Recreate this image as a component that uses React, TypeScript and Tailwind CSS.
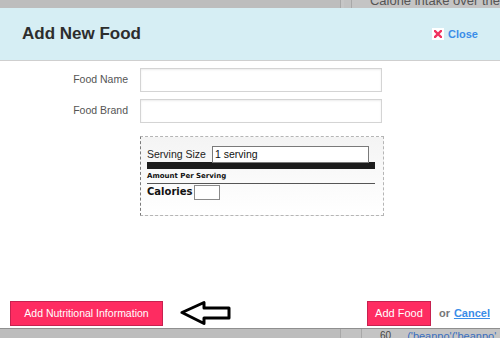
import React from 'react'

// ── Small pieces ──────────────────────────────────────────────────────────────

const CloseIcon: React.FC = () => (
  <span className="flex h-[12px] w-[12px] items-center justify-center bg-white">
    <svg width="8" height="8" viewBox="0 0 8 8" aria-hidden="true">
      <path d="M1 1L7 7M7 1L1 7" stroke="#f0325f" strokeWidth="2.4" strokeLinecap="square" />
    </svg>
  </span>
)

const ArrowLeft: React.FC = () => (
  <svg width="52" height="26" viewBox="0 0 52 26" aria-hidden="true">
    <path
      d="M2 12.5L24 2.5V8H49V18H24V23.5Z"
      fill="none"
      stroke="#000"
      strokeWidth="3"
      strokeLinejoin="round"
    />
  </svg>
)

const Field: React.FC<{ label: string }> = ({ label }) => (
  <div className="flex items-center">
    <label className="w-[129px] pr-[1px] text-right text-[10.5px] text-[#555]">{label}</label>
    <input
      className="ml-[11px] h-[24px] w-[242px] border border-[#d4d4d4] bg-white shadow-[inset_0_1px_2px_rgba(0,0,0,0.08)] outline-none"
      readOnly
    />
  </div>
)

// ── App ───────────────────────────────────────────────────────────────────────

export default function App() {
  return (
    <div
      className="flex h-[338px] w-[500px] flex-col overflow-hidden bg-[#bdbdbd]"
      style={{ fontFamily: '"Liberation Sans", Arial, sans-serif' }}
    >
      {/* page behind, top edge */}
      <div className="flex h-[8px] shrink-0 items-end overflow-hidden">
        <div className="w-[340px] shrink-0" />
        <div className="h-full w-[1px] bg-[#a8a8a8]" />
        <div className="h-full w-[6px] bg-[#c6c6c6]" />
        <div className="h-full w-[13px] bg-[#c2c2c2]" />
        <div className="h-full w-[1px] bg-[#a8a8a8]" />
        <div className="h-full flex-1 bg-[#c4c4c4] pl-[18px]">
          <span className="-mt-[6px] block whitespace-nowrap text-[13px] leading-[14px] text-[#555]">
            Calorie intake over the
          </span>
        </div>
      </div>

      {/* modal */}
      <div className="flex flex-1 flex-col bg-white">
        <div className="flex h-[53px] shrink-0 items-center justify-between border-b border-[#cfcfcf] bg-[#d6eef4] pl-[22px] pr-[22px]">
          <h1 className="text-[17px] font-bold text-[#2d2d2d]">Add New Food</h1>
          <a className="flex items-center gap-[4px] text-[11px] font-bold text-[#3a8de8]">
            <CloseIcon />
            Close
          </a>
        </div>

        <div className="flex flex-1 flex-col">
          <div className="flex flex-col gap-[7px] pt-[7px]">
            <Field label="Food Name" />
            <Field label="Food Brand" />
          </div>

          {/* nutrition label */}
          <div className="ml-[140px] mt-[13px] h-[80px] w-[244px] border border-dashed border-[#b5b5b5] border-l-[#7a7a7a] bg-gradient-to-b from-[#f4f4f4] to-white pl-[6px] pr-[8px] pt-[9px]">
            <div className="flex items-center">
              <span className="w-[65px] text-[10.5px] text-[#222]">Serving Size</span>
              <div className="h-[17px] w-[157px] border border-[#7a7a7a] bg-white pl-[2px] text-[10.5px] leading-[15px] text-[#111]">
                1 serving
              </div>
            </div>
            <div className="-mt-[1px] h-[7px] bg-[#1c1c1c]" />
            <div
              className="border-b border-[#555] pb-[1px] pt-[2px] text-[7px] font-bold text-[#111]"
              style={{ fontFamily: '"DejaVu Sans", Verdana, sans-serif' }}
            >
              Amount Per Serving
            </div>
            <div className="flex items-center gap-[2px] pt-[1px]">
              <span
                className="text-[10px] font-bold leading-[14px] text-[#111]"
                style={{ fontFamily: '"DejaVu Sans", Verdana, sans-serif' }}
              >
                Calories
              </span>
              <span className="h-[15px] w-[26px] border border-[#8a8a8a] bg-white" />
            </div>
          </div>

          {/* footer */}
          <div className="mt-auto flex items-end pb-[2px] pl-[10px] pr-[10px]">
            <button className="h-[25px] w-[153px] border border-[#c72150] bg-[#fe2c61] text-[10.5px] text-white">
              Add Nutritional Information
            </button>
            <span className="ml-[17px] flex">
              <ArrowLeft />
            </span>
            <div className="ml-auto flex items-center">
              <button className="h-[25px] w-[64px] border border-[#c72150] bg-[#fe2c61] text-[11px] text-white">
                Add Food
              </button>
              <span className="ml-[8px] text-[11px] font-bold text-[#777]">or</span>
              <a className="ml-[4px] text-[11px] font-bold text-[#3a8de8] underline">Cancel</a>
            </div>
          </div>
        </div>
      </div>

      {/* page behind, bottom edge */}
      <div className="flex h-[10px] shrink-0 overflow-hidden border-t border-[#8f8f8f] bg-[#bdbdbd]">
        <div className="w-[340px] shrink-0" />
        <div className="h-full w-[1px] bg-[#a8a8a8]" />
        <div className="h-full w-[20px] bg-[#c2c2c2]" />
        <div className="h-full w-[1px] bg-[#a8a8a8]" />
        <div className="flex flex-1 gap-[16px] bg-[#c4c4c4] pl-[18px]">
          <span className="text-[10px] leading-[14px] text-[#444]">60</span>
          <span className="whitespace-nowrap text-[11px] leading-[14px] text-[#3a6fc0]">
            ('beanpo'('beanpo'
          </span>
        </div>
      </div>
    </div>
  )
}
